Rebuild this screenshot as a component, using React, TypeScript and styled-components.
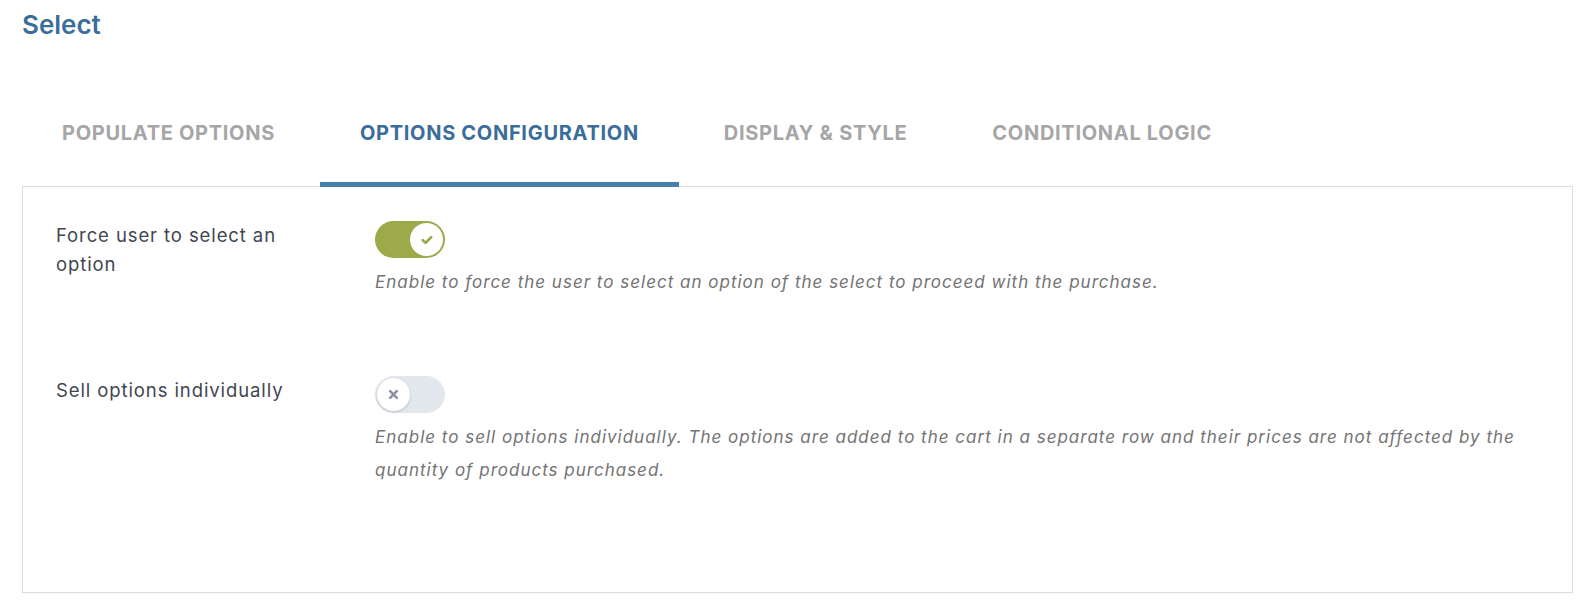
import styled, { createGlobalStyle } from "styled-components";

const GlobalStyle = createGlobalStyle`
  body {
    margin: 0;
    background: #ffffff;
    font-family: Inter, "Noto Sans", "Liberation Sans", sans-serif;
    -webkit-font-smoothing: antialiased;
  }
`;

type TabItem = { label: string; active?: boolean };

const tabs: TabItem[] = [
  { label: "Populate options" },
  { label: "Options configuration", active: true },
  { label: "Display & Style" },
  { label: "Conditional logic" },
];

type SettingProps = {
  label: string;
  description: string;
  checked: boolean;
};

const settings: SettingProps[] = [
  {
    label: "Force user to select an option",
    description:
      "Enable to force the user to select an option of the select to proceed with the purchase.",
    checked: true,
  },
  {
    label: "Sell options individually",
    description:
      "Enable to sell options individually. The options are added to the cart in a separate row and their prices are not affected by the quantity of products purchased.",
    checked: false,
  },
];

const CheckIcon = () => (
  <svg width="12" height="10" viewBox="0 0 12 10" fill="none">
    <path
      d="M1.8 5.2 L4.6 7.9 L10.2 2.1"
      stroke="#97a646"
      strokeWidth="2.6"
      strokeLinecap="round"
      strokeLinejoin="round"
    />
  </svg>
);

const CrossIcon = () => (
  <svg width="11" height="11" viewBox="0 0 11 11" fill="none">
    <path
      d="M2.2 2.2 L8.8 8.8 M8.8 2.2 L2.2 8.8"
      stroke="#8991a3"
      strokeWidth="2.6"
      strokeLinecap="round"
    />
  </svg>
);

const Toggle = ({ checked }: { checked: boolean }) => (
  <Track $on={checked}>
    <Knob $on={checked}>{checked ? <CheckIcon /> : <CrossIcon />}</Knob>
  </Track>
);

const SettingRow = ({ label, description, checked }: SettingProps) => (
  <Row>
    <Label>{label}</Label>
    <Field>
      <Toggle checked={checked} />
      <Description>{description}</Description>
    </Field>
  </Row>
);

export default function App() {
  return (
    <>
      <GlobalStyle />
      <Page>
        <Title>Select</Title>
        <TabBar>
          {tabs.map((t) => (
            <Tab key={t.label} $active={!!t.active}>
              {t.label}
            </Tab>
          ))}
        </TabBar>
        <Panel>
          {settings.map((s) => (
            <SettingRow key={s.label} {...s} />
          ))}
        </Panel>
      </Page>
    </>
  );
}

const Page = styled.div`
  padding: 9px 21px 0 22px;
`;

const Title = styled.h1`
  margin: 0;
  font-size: 26px;
  line-height: 32px;
  font-weight: 600;
  color: #3b6d9b;
`;

const TabBar = styled.div`
  display: flex;
  gap: 5px;
  margin-top: 45px;
  position: relative;
  z-index: 1;
  margin-bottom: -1px;
`;

const Tab = styled.div<{ $active: boolean }>`
  padding: 35px 40px 37px;
  font-size: 20px;
  line-height: 24px;
  font-weight: 700;
  letter-spacing: 0.7px;
  text-transform: uppercase;
  color: ${(p) => (p.$active ? "#3a6d9a" : "#a6a6a6")};
  border-bottom: 5px solid ${(p) => (p.$active ? "#4580ad" : "transparent")};
`;

const Panel = styled.div`
  border: 1px solid #dcdcdc;
  padding: 34px 33px 105px;
  display: flex;
  flex-direction: column;
  gap: 77px;
`;

const Row = styled.div`
  display: grid;
  grid-template-columns: 250px 1fr;
  column-gap: 69px;
`;

const Label = styled.div`
  font-size: 18.5px;
  line-height: 29px;
  letter-spacing: 0.9px;
  color: #3f4650;
`;

const Field = styled.div`
  display: flex;
  flex-direction: column;
  align-items: flex-start;
`;

const Track = styled.div<{ $on: boolean }>`
  width: 70px;
  height: 37px;
  border-radius: 19px;
  background: ${(p) => (p.$on ? "#9caa4a" : "#e3e7ee")};
  position: relative;
`;

const Knob = styled.span<{ $on: boolean }>`
  position: absolute;
  top: 2px;
  left: ${(p) => (p.$on ? "35px" : "2px")};
  width: 33px;
  height: 33px;
  border-radius: 50%;
  background: #ffffff;
  box-shadow: ${(p) => (p.$on ? "none" : "0 1px 3px rgba(0, 0, 0, 0.18)")};
  display: flex;
  align-items: center;
  justify-content: center;
`;

const Description = styled.p`
  margin: 8px 0 0;
  font-size: 17px;
  line-height: 33px;
  font-style: italic;
  letter-spacing: 1px;
  color: #737373;
`;
